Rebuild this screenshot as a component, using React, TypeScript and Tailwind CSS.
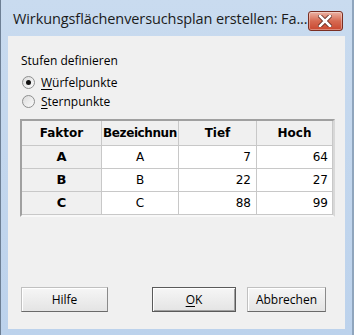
import React from "react";

const rows = [
  { f: "A", name: "A", lo: "7", hi: "64" },
  { f: "B", name: "B", lo: "22", hi: "27" },
  { f: "C", name: "C", lo: "88", hi: "99" },
];

function Radio({ checked, label, u }: { checked?: boolean; label: string; u: string }) {
  return (
    <div className="flex items-center h-[19px]">
      <span className="w-[13px] h-[13px] rounded-full border border-[#8e8f8f] bg-gradient-to-br from-[#dcdcdc] to-[#fbfbfb] flex items-center justify-center">
        {checked && <span className="w-[5px] h-[5px] rounded-full bg-[#111]" />}
      </span>
      <span className="ml-[6px]">
        <span className="underline underline-offset-2">{u}</span>
        {label}
      </span>
    </div>
  );
}

function Btn({ children, def }: { children: React.ReactNode; def?: boolean }) {
  return (
    <button
      className={
        "h-[25px] bg-gradient-to-b from-[#f6f6f6] to-[#e4e4e4] text-[12px] text-black " +
        (def
          ? "border border-[#5a5a5a] shadow-[inset_1px_1px_0_#fff,inset_-1px_-1px_0_#a0a0a0]"
          : "border border-[#c0c0c0] border-b-[#6a6a6a] border-r-[#8a8a8a] shadow-[inset_1px_1px_0_#fff]")
      }
    >
      {children}
    </button>
  );
}

export default function App() {
  return (
    <div
      className="w-[354px] h-[335px] bg-gradient-to-b from-[#c9dbef] to-[#bcd2ec] border-l border-[#6d7f94] border-r-2 border-r-[#8fa5bd] flex flex-col"
      style={{ fontFamily: "'Open Sans', 'Liberation Sans', sans-serif" }}
    >
      {/* title bar */}
      <div className="h-[36px] flex items-start">
        <div className="pl-[12px] pt-[10px] text-[14.5px] text-[#1b1b1b] leading-[18px] tracking-[-0.1px] whitespace-nowrap">
          Wirkungsflächenversuchsplan erstellen: Fa...
        </div>
        <div className="ml-auto mr-[9px] mt-[11px] w-[39px] h-[20px] rounded-[3px] border border-[#7a2e22] bg-gradient-to-b from-[#eab2a4] via-[#d66a52] to-[#c9472f] flex items-center justify-center shadow-[inset_0_0_0_1px_rgba(255,255,255,0.35)]">
          <svg width="14" height="12" viewBox="0 0 14 12">
            <path d="M2 1 L12 11 M12 1 L2 11" stroke="#5a2219" strokeWidth="4.2" strokeLinecap="square" />
            <path d="M2 1 L12 11 M12 1 L2 11" stroke="#fff" strokeWidth="2.6" strokeLinecap="square" />
          </svg>
        </div>
      </div>

      {/* client */}
      <div className="mx-[7px] h-[293px] bg-[#f0f0f0] text-[12px] text-black flex flex-col">
        <div className="pl-[13px] pt-[17px] leading-[16px]">Stufen definieren</div>
        <div className="pl-[14px] pt-[4px] flex flex-col">
          <Radio checked u="W" label="ürfelpunkte" />
          <Radio u="S" label="ternpunkte" />
        </div>

        {/* table */}
        <div className="ml-[12px] mt-[8px] w-[315px] h-[98px] border-2 border-[#a0a0a0] border-b-[#f8f8f8] border-r-[#d8d8d8] bg-[#f0f0f0]">
          <div className="grid grid-cols-[80px_77px_78px_75px] bg-white border-r border-[#c8c8c8]" style={{ fontFamily: "Tahoma, 'DejaVu Sans', 'Liberation Sans', sans-serif" }}>
            <div className="h-[25px] bg-[#f0f0f0] border-r border-b border-[#c8c8c8] font-bold text-[12px] flex items-center justify-center">Faktor</div>
            <div className="h-[25px] bg-[#f0f0f0] border-r border-b border-[#c8c8c8] font-bold text-[12px] flex items-center justify-center overflow-hidden whitespace-nowrap tracking-[-0.4px]">Bezeichnun</div>
            <div className="h-[25px] bg-[#f0f0f0] border-r border-b border-[#c8c8c8] font-bold text-[12px] flex items-center justify-center">Tief</div>
            <div className="h-[25px] bg-[#f0f0f0] border-b border-[#c8c8c8] font-bold text-[12px] flex items-center justify-center">Hoch</div>
            {rows.map((r) => (
              <React.Fragment key={r.f}>
                <div className="h-[23px] bg-[#f0f0f0] border-r border-b border-[#c8c8c8] font-bold text-[13px] flex items-center justify-center">{r.f}</div>
                <div className="h-[23px] border-r border-b border-[#c8c8c8] text-[12px] flex items-center justify-center">{r.name}</div>
                <div className="h-[23px] border-r border-b border-[#c8c8c8] text-[12px] flex items-center justify-end pr-[5px]">{r.lo}</div>
                <div className="h-[23px] border-b border-[#c8c8c8] text-[12px] flex items-center justify-end pr-[4px]">{r.hi}</div>
              </React.Fragment>
            ))}
          </div>
        </div>

        {/* buttons */}
        <div className="mt-auto mb-[17px] pl-[13px] flex">
          <div className="w-[87px] flex"><Btn><span className="w-[85px] inline-block">Hilfe</span></Btn></div>
          <div className="ml-[44px] w-[84px] flex"><Btn def><span className="w-[82px] inline-block"><span className="underline underline-offset-2">O</span>K</span></Btn></div>
          <div className="ml-[11px] w-[79px] flex"><Btn><span className="w-[77px] inline-block">Abbrechen</span></Btn></div>
        </div>
      </div>
    </div>
  );
}
